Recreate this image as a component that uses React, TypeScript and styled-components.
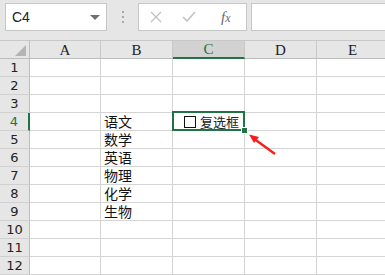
import React from 'react';
import styled, { createGlobalStyle } from 'styled-components';

const GlobalStyle = createGlobalStyle`
  html, body {
    margin: 0;
    padding: 0;
    background: #ffffff;
    overflow: hidden;
  }
`;

const GREEN = '#217346';

const Page = styled.div`
  width: 385px;
  height: 275px;
  position: relative;
  overflow: hidden;
  background: #e6e6e6;
  font-family: 'Noto Sans CJK SC', sans-serif;
`;

const Toolbar = styled.div`
  height: 40px;
  display: flex;
  align-items: flex-start;
  padding: 3px 0 0 5px;
  box-sizing: border-box;
  background: #e6e6e6;
`;

const NameBox = styled.div`
  width: 102px;
  height: 28px;
  box-sizing: border-box;
  background: #fff;
  border: 1px solid #c6c6c6;
  display: flex;
  align-items: center;
  justify-content: space-between;
  padding: 0 6px 0 6px;
  font-family: 'Liberation Sans', Arial, sans-serif;
  font-size: 14px;
  color: #222;
`;

const Caret = styled.span`
  width: 0;
  height: 0;
  border-left: 5px solid transparent;
  border-right: 5px solid transparent;
  border-top: 5px solid #6f6f6f;
`;

const Grip = styled.div`
  width: 31px;
  height: 28px;
  display: flex;
  flex-direction: column;
  align-items: center;
  justify-content: center;
  gap: 3px;
  span {
    width: 2px;
    height: 2px;
    background: #a8a8a8;
  }
`;

const ActionBox = styled.div`
  width: 109px;
  height: 28px;
  box-sizing: border-box;
  background: #fff;
  border: 1px solid #c6c6c6;
  display: flex;
  align-items: center;
  padding-left: 11px;
  gap: 20px;
`;

const Fx = styled.span`
  font-family: 'Liberation Serif', serif;
  font-style: italic;
  font-size: 15px;
  color: #6a6a6a;
  margin-left: 5px;
  b {
    font-weight: normal;
    font-size: 12px;
  }
`;

const FormulaBox = styled.div`
  flex: 1;
  height: 28px;
  margin-left: 4px;
  box-sizing: border-box;
  background: #fff;
  border: 1px solid #c6c6c6;
  border-right: none;
`;

const Sheet = styled.div`
  display: grid;
  grid-template-columns: 30px 71px 72px 72px 72px 72px;
  grid-auto-rows: 18px;
  grid-template-rows: 19px;
  background: #fff;
  position: relative;
`;

const Corner = styled.div`
  background: #e6e6e6;
  border-top: 1px solid #c8c8c8;
  border-right: 1px solid #bdbdbd;
  border-bottom: 1px solid #bdbdbd;
  box-sizing: border-box;
  position: relative;
  &::after {
    content: '';
    position: absolute;
    right: 3px;
    bottom: 2px;
    width: 0;
    height: 0;
    border-left: 11px solid transparent;
    border-bottom: 11px solid #b4b4b4;
  }
`;

const ColHead = styled.div<{ $active?: boolean }>`
  background: ${(p) => (p.$active ? '#d2d2d2' : '#e6e6e6')};
  border-top: 1px solid #c8c8c8;
  border-right: 1px solid #c8c8c8;
  border-bottom: ${(p) => (p.$active ? `2px solid ${GREEN}` : '1px solid #bdbdbd')};
  box-sizing: border-box;
  display: flex;
  align-items: center;
  justify-content: center;
  font-family: 'Liberation Serif', serif;
  font-size: 15px;
  line-height: 16px;
  color: ${(p) => (p.$active ? GREEN : '#222')};
`;

const RowHead = styled.div<{ $active?: boolean }>`
  background: #e6e6e6;
  border-right: ${(p) => (p.$active ? `2px solid ${GREEN}` : '1px solid #bdbdbd')};
  border-bottom: 1px solid #d0d0d0;
  box-sizing: border-box;
  display: flex;
  align-items: center;
  justify-content: center;
  font-family: 'DejaVu Sans', sans-serif;
  font-size: 13px;
  line-height: 15px;
  color: ${(p) => (p.$active ? GREEN : '#222')};
`;

const Cell = styled.div<{ $selected?: boolean }>`
  border-right: 1px solid #d4d4d4;
  border-bottom: 1px solid #d4d4d4;
  box-sizing: border-box;
  display: flex;
  align-items: center;
  padding-left: 3px;
  font-family: 'Noto Sans CJK SC', sans-serif;
  font-size: 14px;
  line-height: 15px;
  color: #111;
  position: relative;
  white-space: nowrap;
  ${(p) =>
    p.$selected &&
    `
    &::before {
      content: '';
      position: absolute;
      left: -1px;
      top: -2px;
      right: -1px;
      bottom: -1px;
      border: 2px solid ${GREEN};
      pointer-events: none;
    }
  `}
`;

const Handle = styled.span`
  position: absolute;
  right: -4px;
  bottom: -4px;
  width: 5px;
  height: 5px;
  background: ${GREEN};
  border: 1px solid #fff;
  z-index: 2;
`;

const CheckControl = styled.span`
  display: flex;
  align-items: center;
  gap: 4px;
  margin-left: 8px;
  font-size: 13px;
  line-height: 14px;
  color: #222;
`;

const Box = styled.span`
  width: 12px;
  height: 12px;
  box-sizing: border-box;
  border: 1px solid #111;
  background: #fff;
`;

const Arrow = styled.svg`
  position: absolute;
  left: 244px;
  top: 128px;
  pointer-events: none;
`;

const cols = ['A', 'B', 'C', 'D', 'E'];
const subjects: Record<number, string> = {
  4: '语文',
  5: '数学',
  6: '英语',
  7: '物理',
  8: '化学',
  9: '生物',
};

export default function App() {
  const rows = Array.from({ length: 12 }, (_, i) => i + 1);
  return (
    <Page>
      <GlobalStyle />
      <Toolbar>
        <NameBox>
          C4
          <Caret />
        </NameBox>
        <Grip>
          <span />
          <span />
          <span />
        </Grip>
        <ActionBox>
          <svg width="12" height="12" viewBox="0 0 12 12">
            <path d="M1 1 L11 11 M11 1 L1 11" stroke="#c3c3c3" strokeWidth="1.4" />
          </svg>
          <svg width="14" height="12" viewBox="0 0 14 12">
            <path d="M1 6 L5 10 L13 1" stroke="#c3c3c3" strokeWidth="1.6" fill="none" />
          </svg>
          <Fx>
            f<b>x</b>
          </Fx>
        </ActionBox>
        <FormulaBox />
      </Toolbar>
      <Sheet>
        <Corner />
        {cols.map((c) => (
          <ColHead key={c} $active={c === 'C'}>
            {c}
          </ColHead>
        ))}
        {rows.map((r) => (
          <React.Fragment key={r}>
            <RowHead $active={r === 4}>{r}</RowHead>
            {cols.map((c) => {
              const selected = r === 4 && c === 'C';
              return (
                <Cell key={c} $selected={selected}>
                  {c === 'B' && subjects[r]}
                  {selected && (
                    <>
                      <CheckControl>
                        <Box />
                        复选框
                      </CheckControl>
                      <Handle />
                    </>
                  )}
                </Cell>
              );
            })}
          </React.Fragment>
        ))}
      </Sheet>
      <Arrow width="40" height="35" viewBox="0 0 40 35">
        <path d="M31 26 L9 10" stroke="#ff1a1a" strokeWidth="2.4" />
        <path d="M5 6.5 L15 9 L10 15 Z" fill="#ff1a1a" />
      </Arrow>
    </Page>
  );
}
